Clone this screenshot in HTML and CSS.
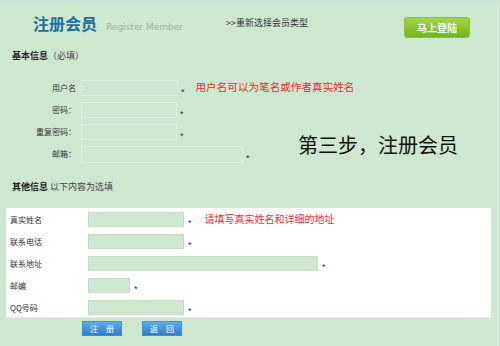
FILE: index.html
```html
<!DOCTYPE html>
<html lang="zh-CN">
<head>
<meta charset="utf-8">
<title>注册会员</title>
<link rel="stylesheet" href="styles.css">
</head>
<body>
<div class="page">
  <div class="header">
    <h1 class="title">注册会员</h1>
    <span class="subtitle">Register Member</span>
    <a class="reselect">&gt;&gt;重新选择会员类型</a>
    <a class="login-btn">马上登陆</a>
  </div>

  <h2 class="section-head"><b>基本信息</b>（必填）</h2>
  <div class="basic">
    <div class="basic-form">
      <div class="row">
        <label class="label">用户名</label>
        <span class="input w97"></span>
        <span class="star">*</span>
        <span class="hint">用户名可以为笔名或作者真实姓名</span>
      </div>
      <div class="row">
        <label class="label">密码：</label>
        <span class="input w96"></span>
        <span class="star">*</span>
      </div>
      <div class="row">
        <label class="label">重复密码：</label>
        <span class="input w96"></span>
        <span class="star">*</span>
      </div>
      <div class="row tall">
        <label class="label">邮箱：</label>
        <span class="input w162"></span>
        <span class="star">*</span>
      </div>
    </div>
    <div class="step">第三步，注册会员</div>
  </div>

  <h2 class="section-head other"><b>其他信息</b> 以下内容为选填</h2>
  <div class="panel">
    <div class="prow">
      <label class="plabel">真实姓名</label>
      <span class="pinput w96"></span>
      <span class="star">*</span>
      <span class="phint">请填写真实姓名和详细的地址</span>
    </div>
    <div class="prow">
      <label class="plabel">联系电话</label>
      <span class="pinput w96"></span>
      <span class="star">*</span>
    </div>
    <div class="prow">
      <label class="plabel">联系地址</label>
      <span class="pinput w230"></span>
      <span class="star">*</span>
    </div>
    <div class="prow">
      <label class="plabel">邮编</label>
      <span class="pinput w42"></span>
      <span class="star">*</span>
    </div>
    <div class="prow">
      <label class="plabel">QQ号码</label>
      <span class="pinput w96"></span>
      <span class="star">*</span>
    </div>
  </div>
  <div class="actions">
    <a class="blue-btn">注 册</a>
    <a class="blue-btn">返 回</a>
  </div>
</div>
</body>
</html>
```

FILE: styles.css
```css
html, body {
  margin: 0;
  padding: 0;
}
body {
  background: #cde8cf;
  font-family: "Noto Sans CJK SC", "Liberation Sans", sans-serif;
  color: #333;
  width: 500px;
  height: 346px;
  overflow: hidden;
}
.page {
  border-top: 2px solid #c5e2dc;
  border-right: 1px solid #dcefe0;
  width: 497px;
  height: 344px;
  box-sizing: content-box;
}
.header {
  display: flex;
  align-items: flex-start;
  height: 38px;
  padding: 13px 0 0 33px;
  box-sizing: border-box;
}
.title {
  margin: 0;
  font-size: 16px;
  line-height: 16px;
  font-weight: bold;
  color: #1c6ea3;
  letter-spacing: 0;
}
.subtitle {
  margin: 6px 0 0 9px;
  font-family: "DejaVu Sans", sans-serif;
  font-size: 9px;
  line-height: 12px;
  color: #a2b0a4;
}
.reselect {
  margin: 2px 0 0 43px;
  font-size: 9px;
  line-height: 12px;
  color: #333;
}
.login-btn {
  margin: 2px 27px 0 auto;
  width: 66px;
  height: 21px;
  box-sizing: border-box;
  border-radius: 3px;
  background: linear-gradient(#a3d44c, #70b61c);
  border: 1px solid #86c531;
  color: #fff;
  font-size: 10px;
  font-weight: bold;
  line-height: 19px;
  text-align: center;
}
.section-head {
  margin: 10px 0 0 12px;
  font-size: 9px;
  line-height: 12px;
  font-weight: normal;
  color: #444;
}
.section-head b {
  color: #222;
}
.basic {
  display: flex;
  margin-top: 18px;
}
.basic-form {
  width: 298px;
  flex: none;
}
.row {
  display: flex;
  align-items: flex-start;
  height: 16px;
  margin-bottom: 6px;
  white-space: nowrap;
}
.row.tall {
  height: 17px;
  margin-bottom: 0;
}
.label {
  width: 76px;
  text-align: right;
  font-size: 8px;
  line-height: 16px;
  color: #333;
  flex: none;
}
.input {
  margin-left: 5px;
  height: 16px;
  box-sizing: border-box;
  border: 1px solid #dbefdd;
  flex: none;
}
.row.tall .input {
  height: 17px;
}
.w97 { width: 97px; }
.w96 { width: 96px; }
.w162 { width: 162px; }
.w230 { width: 230px; }
.w42 { width: 42px; }
.star {
  margin-left: 3px;
  padding-top: 6px;
  font-family: "Liberation Sans", sans-serif;
  font-size: 9px;
  line-height: 12px;
  color: #333;
  flex: none;
}
.hint {
  margin-left: 11px;
  font-size: 10.6px;
  line-height: 14px;
  color: #f02a2a;
}
.step {
  margin-top: 55px;
  font-size: 20px;
  line-height: 20px;
  color: #111;
  white-space: nowrap;
}
.section-head.other {
  margin-top: 18px;
}
.panel {
  margin: 15px 0 0 6px;
  width: 485px;
  height: 110px;
  box-sizing: border-box;
  background: #fff;
  border-bottom: 1px solid #e4efe4;
  padding: 4px 0 0 4px;
}
.prow {
  display: flex;
  align-items: flex-start;
  height: 15px;
  margin-bottom: 7px;
  white-space: nowrap;
}
.plabel {
  width: 78px;
  font-size: 8px;
  line-height: 15px;
  color: #333;
  flex: none;
}
.pinput {
  height: 15px;
  box-sizing: border-box;
  background: #cde8cf;
  border: 1px solid #c3dfc6;
  flex: none;
}
.prow .star {
  margin-left: 4px;
  padding-top: 5px;
}
.phint {
  margin-left: 13px;
  font-size: 10px;
  line-height: 14px;
  color: #f53030;
}
.actions {
  display: flex;
  gap: 20px;
  margin: 3px 0 0 82px;
}
.blue-btn {
  width: 40px;
  height: 15px;
  box-sizing: border-box;
  background: linear-gradient(#5caeee, #2c7ecb);
  border: 1px solid #3f8fd6;
  color: #fff;
  font-size: 8px;
  line-height: 13px;
  text-align: center;
  letter-spacing: 3px;
  text-indent: 3px;
}
```
